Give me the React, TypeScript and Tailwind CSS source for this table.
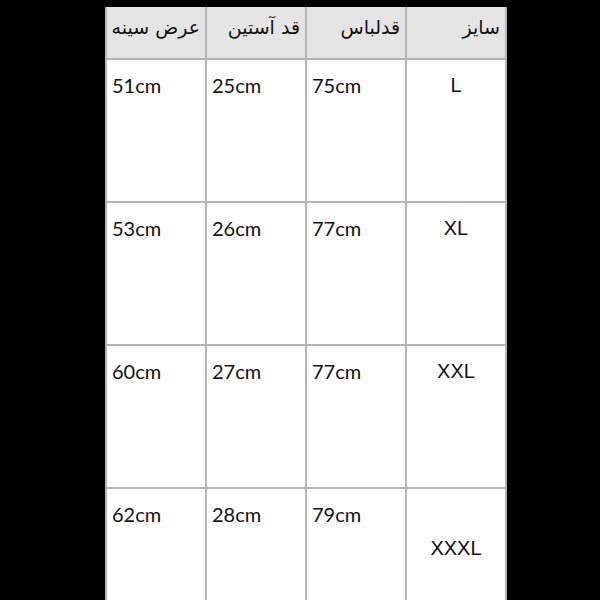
const headers = ["عرض سینه", "قد آستین", "قدلباس", "سایز"];

const rows = [
  { chest: "51cm", sleeve: "25cm", length: "75cm", size: "L", low: false },
  { chest: "53cm", sleeve: "26cm", length: "77cm", size: "XL", low: false },
  { chest: "60cm", sleeve: "27cm", length: "77cm", size: "XXL", low: false },
  { chest: "62cm", sleeve: "28cm", length: "79cm", size: "XXXL", low: true },
];

const App = () => {
  return (
    <div className="w-[600px] h-[600px] bg-black overflow-hidden pt-[7px] pl-[105px]">
      <div className="w-[402px] bg-[#b4b4b4] px-[2px] grid grid-cols-4 gap-x-[2px] gap-y-[2px]">
        {headers.map((h) => (
          <div
            key={h}
            dir="rtl"
            className="h-[51px] bg-[#e4e4e4] pr-[5px] pt-[6px] text-[19px] leading-[28px] text-[#111] font-['DejaVu_Sans',sans-serif]"
          >
            {h}
          </div>
        ))}
        {rows.map((r) => (
          <>
            <div key={r.chest + "c"} className="h-[141px] bg-white pl-[5px] pt-[11px] text-[20px] leading-[28px] text-[#111] font-['Lato',sans-serif]">
              {r.chest}
            </div>
            <div key={r.chest + "s"} className="h-[141px] bg-white pl-[5px] pt-[11px] text-[20px] leading-[28px] text-[#111] font-['Lato',sans-serif]">
              {r.sleeve}
            </div>
            <div key={r.chest + "l"} className="h-[141px] bg-white pl-[5px] pt-[11px] text-[20px] leading-[28px] text-[#111] font-['Lato',sans-serif]">
              {r.length}
            </div>
            <div
              key={r.chest + "z"}
              className={
                r.low
                  ? "h-[141px] bg-white text-center pt-[45px] text-[20px] leading-[28px] text-[#111] font-['Liberation_Sans',sans-serif]"
                  : "h-[141px] bg-white text-center pt-[11px] text-[20px] leading-[28px] text-[#111] font-['Liberation_Sans',sans-serif]"
              }
            >
              {r.size}
            </div>
          </>
        ))}
      </div>
    </div>
  );
};

export default App;
